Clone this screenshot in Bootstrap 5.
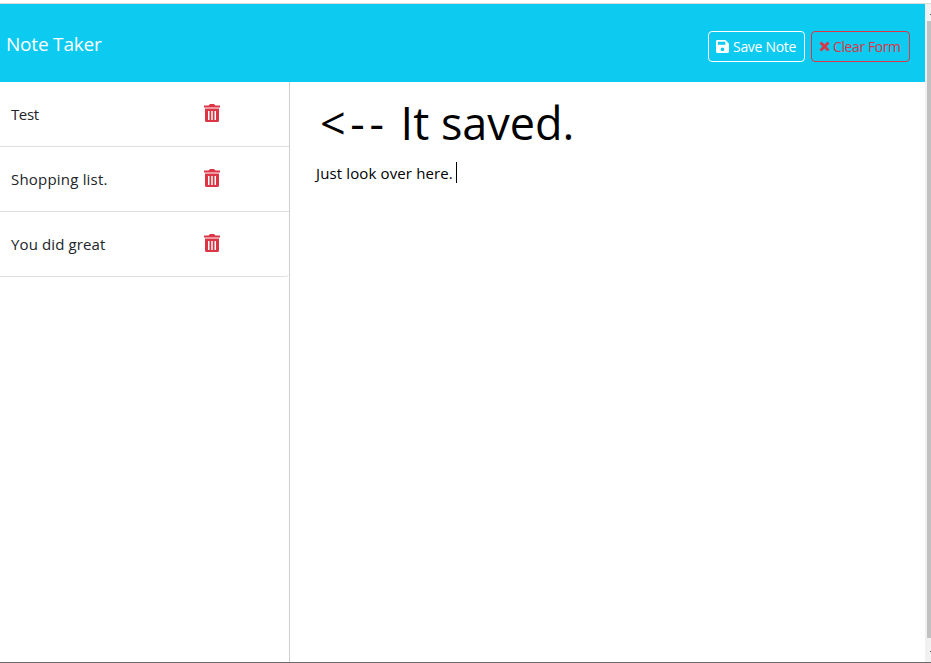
<!DOCTYPE html>
<html lang="en">
<head>
<meta charset="utf-8">
<meta name="viewport" content="width=device-width, initial-scale=1">
<title>Note Taker</title>
<link rel="stylesheet" href="https://cdn.jsdelivr.net/npm/bootstrap@5.3.0/dist/css/bootstrap.min.css">
<style>
html { background: #fff; overflow: hidden; }
body { font-family: "Open Sans", "Noto Sans", sans-serif; }
.app-shell { height: 663px; padding-top: 3px; overflow: hidden; }
.frame { border-top: 1px solid #dadce0; border-bottom: 1px solid #6b6b6b; height: 660px; }
.top-bar { height: 78px; background: #0dcaf0; padding: 2px 15px 0 6px; }
.brand-text { font-size: 19px; letter-spacing: -.2px; line-height: 30px; }
.bar-btn { height: 31px; font-size: 14px; letter-spacing: -.3px; padding: 0 7px; --bs-btn-border-radius: 4px; white-space: nowrap; }
.bar-btn svg { flex: none; }
.save-btn { width: 97px; }
.clear-btn { width: 99px; letter-spacing: -.4px; }
.btn-label { margin-left: 3px; }
.save-btn .btn-label { margin-left: 4px; }
.bar-actions { gap: 6px; }
.notes-col { width: 290px; border-right: 1px solid #cfcfcf; }
.note-row { height: 65px; padding: 0 69px 0 11px; border-width: 0 0 1px; border-color: #dfdfdf; border-radius: 0; font-size: 15px; letter-spacing: .12px; color: #212529; }
.note-row:first-child { letter-spacing: -.4px; }
.note-row:nth-child(2) { letter-spacing: .2px; }
.note-row:last-child { border-bottom-right-radius: 4px; letter-spacing: .12px; }
.note-row svg { margin-top: -3px; }
.note-body { padding: 12px 26px; color: #000; }
.note-title { font-size: 45px; line-height: 58px; font-weight: 400; padding-left: 4px; }
.arrow-head { letter-spacing: 4.6px; }
.arrow-dash { letter-spacing: 4.8px; }
.note-text { font-size: 15px; line-height: 22px; letter-spacing: .13px; margin-top: 10px; }
.caret { width: 1px; height: 21px; background: #000; margin: -2px 0 0 3px; }
.scroll-track { width: 6px; background: #f1f1f1; padding: 10px 0; }
.scroll-thumb { height: 617px; margin: 6px 0 13px 2px; background: #c1c1c1; }
.arrow-tip { width: 1px; height: 1px; background: #505050; }
</style>
<script src="https://cdn.jsdelivr.net/npm/bootstrap@5.3.0/dist/js/bootstrap.bundle.min.js"></script>
</head>
<body>
<svg class="d-none" aria-hidden="true"><symbol id="trash" viewBox="0 0 16 18"><path fill-rule="evenodd" d="M0 1.500h4.500L6 0h4l1.500 1.500H16v2H0ZM1 4.500h14v12q0 1.500-1.500 1.500h-11Q1 18 1 16.500ZM4 7v9h1.500V7Zm3.250 0v9h1.500V7Zm3.250 0v9H12V7Z"/></symbol></svg>
<div class="app-shell">
 <div class="frame d-flex">
  <div class="d-flex flex-column flex-grow-1">
   <nav class="top-bar d-flex align-items-center justify-content-between">
    <span class="brand-text text-white">Note Taker</span>
    <div class="bar-actions d-flex mt-1">
     <button class="btn btn-outline-light bar-btn save-btn d-flex align-items-center text-white border-white">
      <svg width="13" height="13" viewBox="0 0 448 448" fill="currentColor"><path fill-rule="evenodd" d="M48 0h276l110 110q14 14 14 34v256a48 48 0 0 1-48 48H48a48 48 0 0 1-48-48V48A48 48 0 0 1 48 0ZM64 64v96h256V64ZM224 256a64 64 0 1 0 0 128 64 64 0 0 0 0-128Z"/></svg>
      <span class="btn-label">Save Note</span></button>
     <button class="btn btn-outline-danger bar-btn clear-btn d-flex align-items-center">
      <svg width="11" height="11" viewBox="0 0 11 11" fill="none" stroke="currentColor" stroke-width="2.8"><path d="m1.500 1.500 8 8M9.500 1.500l-8 8"/></svg>
      <span class="btn-label">Clear Form</span></button>
    </div>
   </nav>
   <main class="d-flex flex-grow-1">
    <aside class="notes-col flex-shrink-0">
     <ul class="list-group rounded-0">
      <li class="list-group-item note-row d-flex align-items-center justify-content-between"><span>Test</span><svg width="16" height="18" fill="#dc3545"><use href="#trash"/></svg></li>
      <li class="list-group-item note-row d-flex align-items-center justify-content-between"><span>Shopping list.</span><svg width="16" height="18" fill="#dc3545"><use href="#trash"/></svg></li>
      <li class="list-group-item note-row d-flex align-items-center justify-content-between"><span>You did great</span><svg width="16" height="18" fill="#dc3545"><use href="#trash"/></svg></li>
     </ul>
    </aside>
    <section class="note-body flex-grow-1">
     <h1 class="note-title mb-0"><span class="arrow-head">&lt;</span><span class="arrow-dash">--</span> It saved.</h1>
     <div class="note-text d-flex align-items-center"><span>Just look over here.</span><span class="caret"></span></div>
    </section>
   </main>
  </div>
  <div class="scroll-track flex-shrink-0 d-flex flex-column align-items-end">
   <span class="arrow-tip"></span><div class="scroll-thumb align-self-stretch"></div><span class="arrow-tip"></span>
  </div>
 </div>
</div>
</body>
</html>
